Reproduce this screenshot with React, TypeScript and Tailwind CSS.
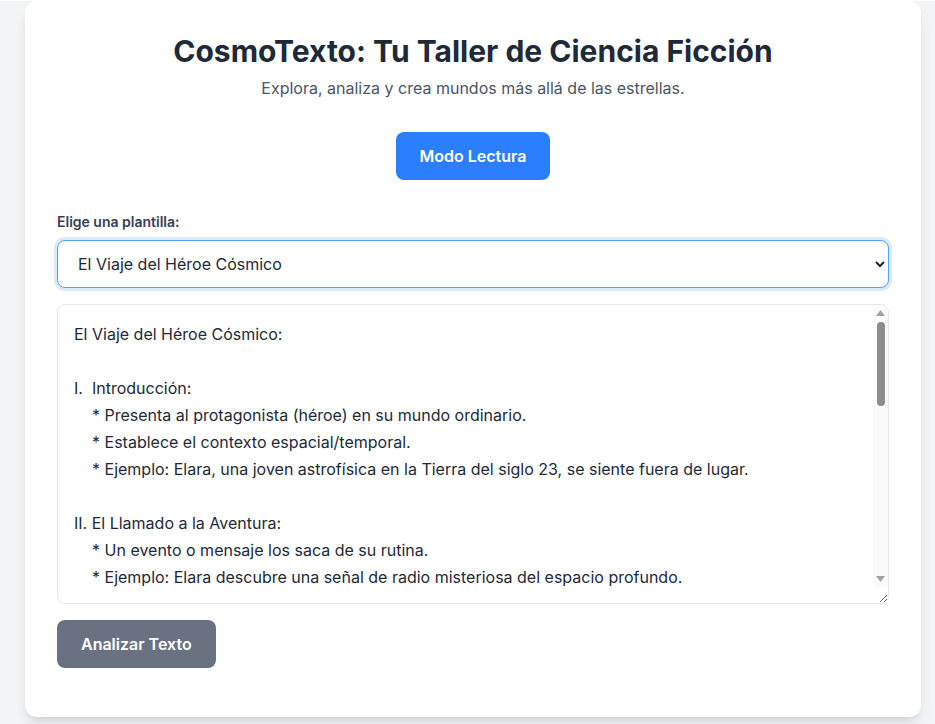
import React from "react";

const plantilla = `El Viaje del Héroe Cósmico:

I.  Introducción:
    * Presenta al protagonista (héroe) en su mundo ordinario.
    * Establece el contexto espacial/temporal.
    * Ejemplo: Elara, una joven astrofísica en la Tierra del siglo 23, se siente fuera de lugar.

II. El Llamado a la Aventura:
    * Un evento o mensaje los saca de su rutina.
    * Ejemplo: Elara descubre una señal de radio misteriosa del espacio profundo.

III. El Rechazo del Llamado:
    * El héroe duda o se niega a aceptar el desafío.
    * Ejemplo: Elara teme las consecuencias y oculta su descubrimiento.

IV. El Encuentro con el Mentor:
    * Un guía ofrece consejo, entrenamiento o herramientas.
    * Ejemplo: Un viejo capitán retirado le revela la historia de la señal.

V. El Cruce del Umbral:
    * El héroe abandona su mundo conocido.
    * Ejemplo: Elara se embarca en una nave experimental hacia el borde del sistema solar.

VI. Pruebas, Aliados y Enemigos:
    * El héroe enfrenta desafíos y forma alianzas.
    * Ejemplo: Elara conoce a una IA rebelde y a una tripulación de contrabandistas.

VII. La Prueba Suprema:
    * El momento de mayor peligro.
    * Ejemplo: Elara debe descifrar la señal antes de que la nave sea destruida.

VIII. El Regreso:
    * El héroe vuelve transformado a su mundo.
    * Ejemplo: Elara regresa a la Tierra con un mensaje que cambiará a la humanidad.`;

export default function App() {
  return (
    <div
      className="min-h-screen bg-gray-100 pl-[25px] pr-[14px]"
      style={{ fontFamily: "Inter, 'Noto Sans', sans-serif" }}
    >
      <div className="mt-px w-[896px] rounded-xl bg-white px-8 pt-8 pb-[49px] shadow-lg">
        <h1 className="text-center text-[30px] leading-9 font-bold text-gray-800">
          CosmoTexto: Tu Taller de Ciencia Ficción
        </h1>
        <p className="mt-[7px] text-center text-base leading-6 text-gray-600">
          Explora, analiza y crea mundos más allá de las estrellas.
        </p>
        <div className="mt-8 flex justify-center">
          <button className="h-12 rounded-lg bg-blue-500 px-6 text-base font-semibold text-white">
            Modo Lectura
          </button>
        </div>
        <label className="mt-8 block text-sm leading-5 font-semibold text-gray-700">
          Elige una plantilla:
        </label>
        <select
          className="mt-2 block h-12 w-full rounded-lg border border-blue-400 bg-white px-4 text-base text-gray-800 ring-3 ring-blue-100 outline-none"
          defaultValue="heroe"
        >
          <option value="heroe">El Viaje del Héroe Cósmico</option>
          <option value="otro">Primer Contacto</option>
        </select>
        <div className="relative mt-4">
          <textarea
            className="block h-[300px] w-full rounded-lg border border-gray-200 p-4 pr-8 text-base leading-[27px] text-gray-800 outline-none"
            defaultValue={plantilla}
          />
          <div className="pointer-events-none absolute top-px right-px bottom-[16px] flex w-[15px] flex-col items-center rounded-tr-lg bg-[#fafafa]">
            <svg width="9" height="6" viewBox="0 0 9 6" className="mt-[5px]">
              <path d="M4.5 0 L9 6 L0 6 Z" fill="#a3a3a3" />
            </svg>
            <div className="mt-[6px] h-[84px] w-[8px] rounded-full bg-[#8c8c8c]" />
            <div className="flex-1" />
            <svg width="9" height="6" viewBox="0 0 9 6" className="mb-[6px]">
              <path d="M0 0 L9 0 L4.5 6 Z" fill="#a3a3a3" />
            </svg>
          </div>
        </div>
        <button className="mt-4 h-12 rounded-lg bg-gray-500 px-6 text-base font-semibold text-white">
          Analizar Texto
        </button>
      </div>
    </div>
  );
}
